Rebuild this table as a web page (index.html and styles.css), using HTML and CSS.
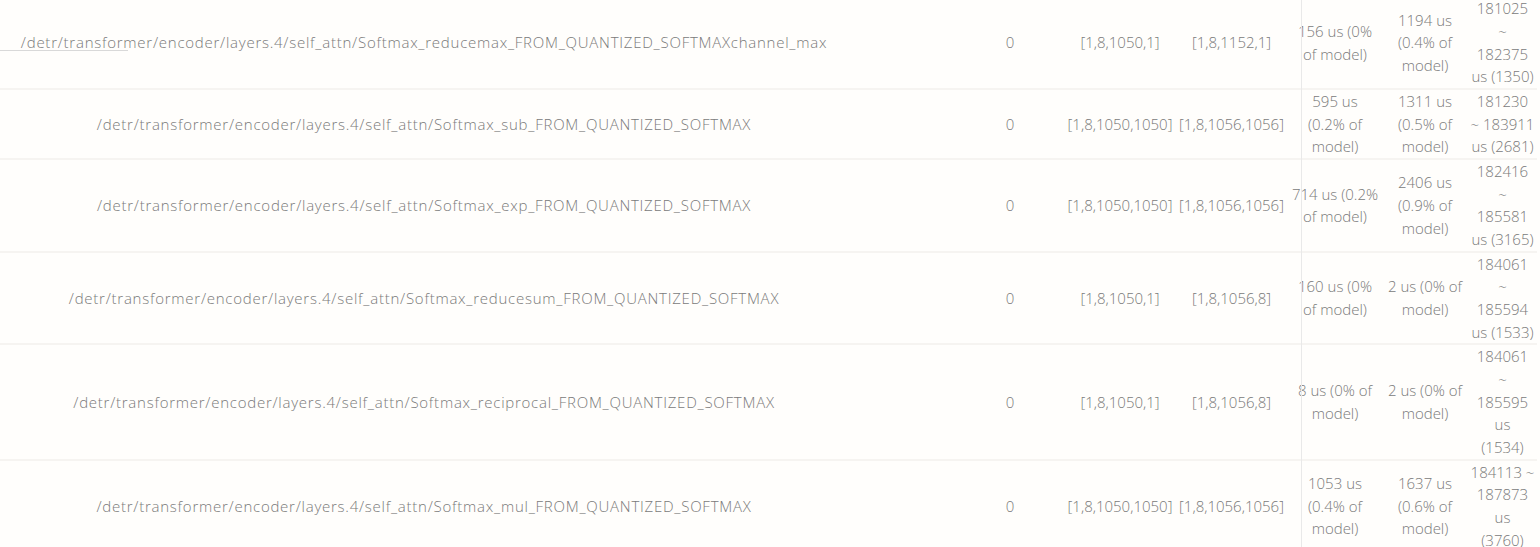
FILE: index.html
```html
<!DOCTYPE html>
<html>
<head>
<meta charset="utf-8">
<link rel="stylesheet" href="styles.css">
</head>
<body>
<div class="wrap">
  <div class="vline"></div>
  <div class="hmark"></div>
  <table class="ops">
    <colgroup>
      <col class="c-name"><col class="c-zero"><col class="c-in"><col class="c-out"><col class="c-t1"><col class="c-t2"><col class="c-rng">
    </colgroup>
    <tbody>
      <tr>
        <td class="name">/detr/transformer/encoder/layers.4/self_attn/Softmax_reducemax_FROM_QUANTIZED_SOFTMAXchannel_max</td>
        <td class="zero">0</td>
        <td>[1,8,1050,1]</td>
        <td>[1,8,1152,1]</td>
        <td>156 us (0%<br>of model)</td>
        <td>1194 us<br>(0.4% of<br>model)</td>
        <td>181025<br>~<br>182375<br>us (1350)</td>
      </tr>
      <tr>
        <td class="name">/detr/transformer/encoder/layers.4/self_attn/Softmax_sub_FROM_QUANTIZED_SOFTMAX</td>
        <td class="zero">0</td>
        <td>[1,8,1050,1050]</td>
        <td>[1,8,1056,1056]</td>
        <td>595 us<br>(0.2% of<br>model)</td>
        <td>1311 us<br>(0.5% of<br>model)</td>
        <td>181230<br>~ 183911<br>us (2681)</td>
      </tr>
      <tr>
        <td class="name">/detr/transformer/encoder/layers.4/self_attn/Softmax_exp_FROM_QUANTIZED_SOFTMAX</td>
        <td class="zero">0</td>
        <td>[1,8,1050,1050]</td>
        <td>[1,8,1056,1056]</td>
        <td>714 us (0.2%<br>of model)</td>
        <td>2406 us<br>(0.9% of<br>model)</td>
        <td>182416<br>~<br>185581<br>us (3165)</td>
      </tr>
      <tr>
        <td class="name">/detr/transformer/encoder/layers.4/self_attn/Softmax_reducesum_FROM_QUANTIZED_SOFTMAX</td>
        <td class="zero">0</td>
        <td>[1,8,1050,1]</td>
        <td>[1,8,1056,8]</td>
        <td>160 us (0%<br>of model)</td>
        <td>2 us (0% of<br>model)</td>
        <td>184061<br>~<br>185594<br>us (1533)</td>
      </tr>
      <tr>
        <td class="name">/detr/transformer/encoder/layers.4/self_attn/Softmax_reciprocal_FROM_QUANTIZED_SOFTMAX</td>
        <td class="zero">0</td>
        <td>[1,8,1050,1]</td>
        <td>[1,8,1056,8]</td>
        <td>8 us (0% of<br>model)</td>
        <td>2 us (0% of<br>model)</td>
        <td>184061<br>~<br>185595<br>us<br>(1534)</td>
      </tr>
      <tr>
        <td class="name">/detr/transformer/encoder/layers.4/self_attn/Softmax_mul_FROM_QUANTIZED_SOFTMAX</td>
        <td class="zero">0</td>
        <td>[1,8,1050,1050]</td>
        <td>[1,8,1056,1056]</td>
        <td>1053 us<br>(0.4% of<br>model)</td>
        <td>1637 us<br>(0.6% of<br>model)</td>
        <td>184113 ~<br>187873<br>us<br>(3760)</td>
      </tr>
    </tbody>
  </table>
</div>
</body>
</html>
```

FILE: styles.css
```css
html, body {
  margin: 0;
  padding: 0;
  background: #fffefc;
}
body {
  font-family: "Open Sans", "Noto Sans", "DejaVu Sans", sans-serif;
  font-weight: 300;
  font-size: 15px;
  line-height: 22.65px;
  color: #7a7a7a;
  overflow: hidden;
}
.wrap {
  position: relative;
  width: 1540px;
  height: 547px;
  overflow: hidden;
}
.ops {
  table-layout: fixed;
  border-collapse: collapse;
  width: 1537px;
  margin-top: -2.6px;
}
.c-name { width: 848px; }
.c-zero { width: 217px; }
.c-in { width: 110px; }
.c-out { width: 113px; }
.c-t1 { width: 94px; }
.c-t2 { width: 86px; }
.c-rng { width: 69px; }
.ops tr {
  border-bottom: 2px solid #f6f4f1;
}
.ops td {
  padding: 0;
  text-align: center;
  vertical-align: middle;
  white-space: nowrap;
}
.ops td.name {
  letter-spacing: 0.75px;
}
.ops td.zero {
  padding-left: 107px;
}
.vline {
  position: absolute;
  left: 1301px;
  top: 0;
  bottom: 0;
  width: 1px;
  background: #e9e9e9;
}
.hmark {
  position: absolute;
  left: 0;
  top: 50px;
  width: 128px;
  height: 1px;
  background: #d9d9d9;
}
```
